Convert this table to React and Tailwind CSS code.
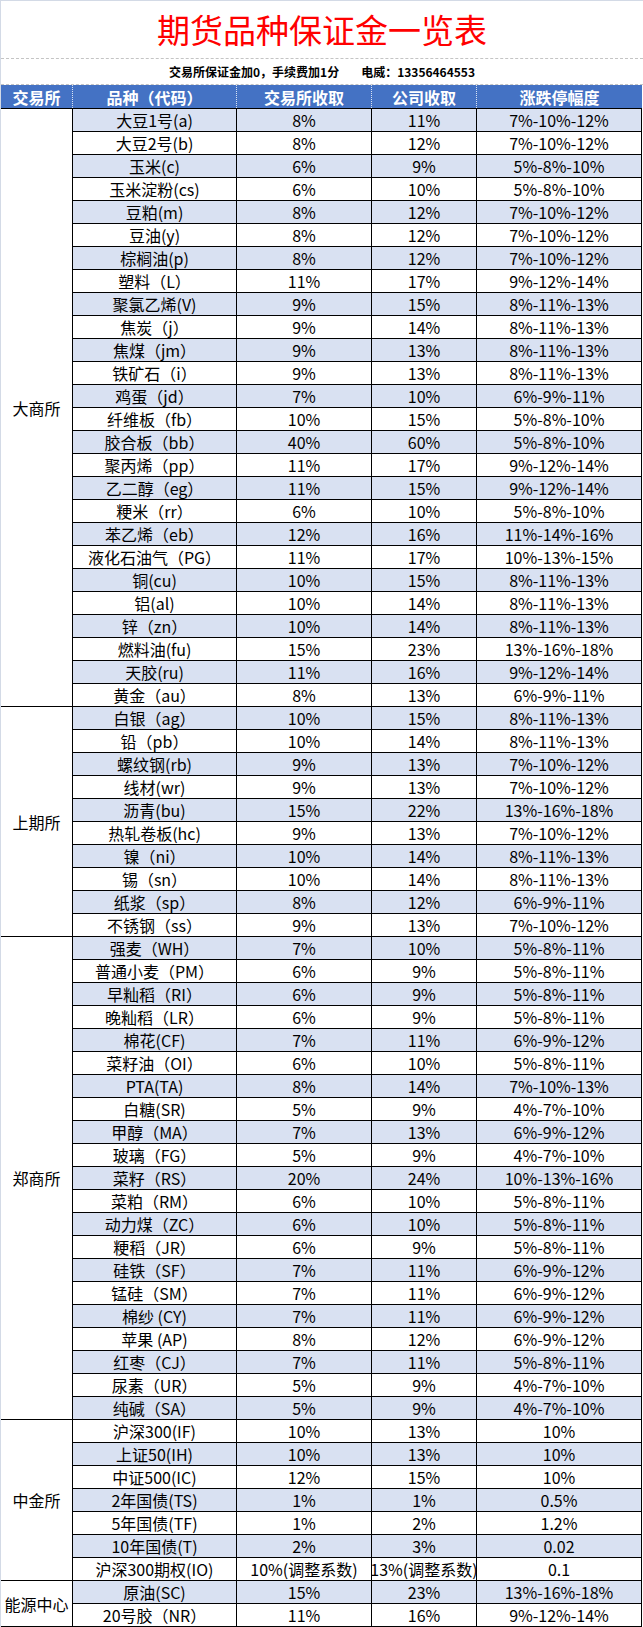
import React from "react";

const groups = [
  {
    name: "大商所",
    rows: [
      ["大豆1号(a)", "8%", "11%", "7%-10%-12%"],
      ["大豆2号(b)", "8%", "12%", "7%-10%-12%"],
      ["玉米(c)", "6%", "9%", "5%-8%-10%"],
      ["玉米淀粉(cs)", "6%", "10%", "5%-8%-10%"],
      ["豆粕(m)", "8%", "12%", "7%-10%-12%"],
      ["豆油(y)", "8%", "12%", "7%-10%-12%"],
      ["棕榈油(p)", "8%", "12%", "7%-10%-12%"],
      ["塑料（L）", "11%", "17%", "9%-12%-14%"],
      ["聚氯乙烯(V)", "9%", "15%", "8%-11%-13%"],
      ["焦炭（j）", "9%", "14%", "8%-11%-13%"],
      ["焦煤（jm）", "9%", "13%", "8%-11%-13%"],
      ["铁矿石（i）", "9%", "13%", "8%-11%-13%"],
      ["鸡蛋（jd）", "7%", "10%", "6%-9%-11%"],
      ["纤维板（fb）", "10%", "15%", "5%-8%-10%"],
      ["胶合板（bb）", "40%", "60%", "5%-8%-10%"],
      ["聚丙烯（pp）", "11%", "17%", "9%-12%-14%"],
      ["乙二醇（eg）", "11%", "15%", "9%-12%-14%"],
      ["粳米（rr）", "6%", "10%", "5%-8%-10%"],
      ["苯乙烯（eb）", "12%", "16%", "11%-14%-16%"],
      ["液化石油气（PG）", "11%", "17%", "10%-13%-15%"],
      ["铜(cu)", "10%", "15%", "8%-11%-13%"],
      ["铝(al)", "10%", "14%", "8%-11%-13%"],
      ["锌（zn）", "10%", "14%", "8%-11%-13%"],
      ["燃料油(fu)", "15%", "23%", "13%-16%-18%"],
      ["天胶(ru)", "11%", "16%", "9%-12%-14%"],
      ["黄金（au）", "8%", "13%", "6%-9%-11%"],
    ],
  },
  {
    name: "上期所",
    rows: [
      ["白银（ag）", "10%", "15%", "8%-11%-13%"],
      ["铅（pb）", "10%", "14%", "8%-11%-13%"],
      ["螺纹钢(rb)", "9%", "13%", "7%-10%-12%"],
      ["线材(wr)", "9%", "13%", "7%-10%-12%"],
      ["沥青(bu)", "15%", "22%", "13%-16%-18%"],
      ["热轧卷板(hc)", "9%", "13%", "7%-10%-12%"],
      ["镍（ni）", "10%", "14%", "8%-11%-13%"],
      ["锡（sn）", "10%", "14%", "8%-11%-13%"],
      ["纸浆（sp）", "8%", "12%", "6%-9%-11%"],
      ["不锈钢（ss）", "9%", "13%", "7%-10%-12%"],
    ],
  },
  {
    name: "郑商所",
    rows: [
      ["强麦（WH）", "7%", "10%", "5%-8%-11%"],
      ["普通小麦（PM）", "6%", "9%", "5%-8%-11%"],
      ["早籼稻（RI）", "6%", "9%", "5%-8%-11%"],
      ["晚籼稻（LR）", "6%", "9%", "5%-8%-11%"],
      ["棉花(CF)", "7%", "11%", "6%-9%-12%"],
      ["菜籽油（OI）", "6%", "10%", "5%-8%-11%"],
      ["PTA(TA)", "8%", "14%", "7%-10%-13%"],
      ["白糖(SR)", "5%", "9%", "4%-7%-10%"],
      ["甲醇（MA）", "7%", "13%", "6%-9%-12%"],
      ["玻璃（FG）", "5%", "9%", "4%-7%-10%"],
      ["菜籽（RS）", "20%", "24%", "10%-13%-16%"],
      ["菜粕（RM）", "6%", "10%", "5%-8%-11%"],
      ["动力煤（ZC）", "6%", "10%", "5%-8%-11%"],
      ["粳稻（JR）", "6%", "9%", "5%-8%-11%"],
      ["硅铁（SF）", "7%", "11%", "6%-9%-12%"],
      ["锰硅（SM）", "7%", "11%", "6%-9%-12%"],
      ["棉纱 (CY)", "7%", "11%", "6%-9%-12%"],
      ["苹果 (AP)", "8%", "12%", "6%-9%-12%"],
      ["红枣（CJ）", "7%", "11%", "5%-8%-11%"],
      ["尿素（UR）", "5%", "9%", "4%-7%-10%"],
      ["纯碱（SA）", "5%", "9%", "4%-7%-10%"],
    ],
  },
  {
    name: "中金所",
    rows: [
      ["沪深300(IF)", "10%", "13%", "10%"],
      ["上证50(IH)", "10%", "13%", "10%"],
      ["中证500(IC)", "12%", "15%", "10%"],
      ["2年国债(TS)", "1%", "1%", "0.5%"],
      ["5年国债(TF)", "1%", "2%", "1.2%"],
      ["10年国债(T)", "2%", "3%", "0.02"],
      ["沪深300期权(IO)", "10%(调整系数)", "13%(调整系数)", "0.1"],
    ],
  },
  {
    name: "能源中心",
    rows: [
      ["原油(SC)", "15%", "23%", "13%-16%-18%"],
      ["20号胶（NR）", "11%", "16%", "9%-12%-14%"],
    ],
  },
];

const font = { fontFamily: '"Noto Sans CJK SC", "Noto Sans", sans-serif' };

export default function App() {
  let idx = 0;
  return (
    <div
      className="w-[643px] h-[1627px] bg-white border-l border-t border-[#D3DAE6] text-black overflow-hidden"
      style={font}
    >
      <div className="h-[58px] border-b border-dashed border-[#C4C4C4] flex items-center justify-center">
        <span className="text-[33px] leading-none text-[#FF0000] tracking-[0px]">期货品种保证金一览表</span>
      </div>
      <div className="h-[26px] border-b border-dashed border-[#C4C4C4] flex items-center justify-center gap-[22px] text-[12px] font-bold leading-none pt-[1px]">
        <span>交易所保证金加0，手续费加1分</span>
        <span>电威：13356464553</span>
      </div>
      <div className="w-[641px] h-[24px] flex bg-[#4472C4] text-white font-bold text-[16px] leading-none border-b border-black">
        <div className="w-[72px] flex items-center justify-center border-r border-dotted border-white/80">交易所</div>
        <div className="w-[164px] flex items-center justify-center border-r border-dotted border-white/80">品种（代码）</div>
        <div className="w-[135px] flex items-center justify-center border-r border-dotted border-white/80">交易所收取</div>
        <div className="w-[105px] flex items-center justify-center border-r border-dotted border-white/80">公司收取</div>
        <div className="w-[165px] flex items-center justify-center">涨跌停幅度</div>
      </div>
      {groups.map((g) => (
        <div key={g.name} className="w-[641px] flex text-[16px] leading-none">
          <div className="w-[72px] shrink-0 flex items-center justify-center border-r border-b border-black whitespace-nowrap">
            {g.name}
          </div>
          <div className="flex-1 flex flex-col">
            {g.rows.map((r) => {
              const blue = idx % 2 === 0;
              idx++;
              return (
                <div
                  key={r[0]}
                  className={
                    blue
                      ? "h-[23px] flex border-b border-black bg-[#D9E1F2]"
                      : "h-[23px] flex border-b border-black bg-white"
                  }
                >
                  <div className="w-[164px] flex items-center justify-center border-r border-black whitespace-nowrap">{r[0]}</div>
                  <div className="w-[135px] flex items-center justify-center border-r border-black whitespace-nowrap">{r[1]}</div>
                  <div className="w-[105px] flex items-center justify-center border-r border-black whitespace-nowrap">{r[2]}</div>
                  <div className="w-[165px] flex items-center justify-center border-r border-black whitespace-nowrap">{r[3]}</div>
                </div>
              );
            })}
          </div>
        </div>
      ))}
    </div>
  );
}
